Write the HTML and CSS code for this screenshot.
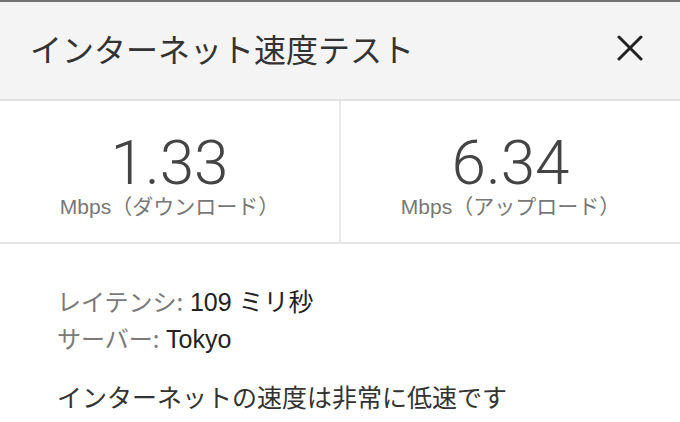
FILE: index.html
```html
<!DOCTYPE html>
<html lang="ja">
<head>
<meta charset="utf-8">
<link rel="stylesheet" href="styles.css">
</head>
<body>
<div class="topline"></div>
<header class="header">
  <h1 class="title">インターネット速度テスト</h1>
  <button class="close" aria-label="閉じる">
    <svg width="26" height="26" viewBox="0 0 26 26"><path d="M2 2 L24 24 M24 2 L2 24" stroke="#222" stroke-width="3" stroke-linecap="round" fill="none"/></svg>
  </button>
</header>
<section class="stats">
  <div class="stat">
    <div class="num">1.33</div>
    <div class="unit">Mbps（ダウンロード）</div>
  </div>
  <div class="divider"></div>
  <div class="stat">
    <div class="num">6.34</div>
    <div class="unit">Mbps（アップロード）</div>
  </div>
</section>
<section class="details">
  <div class="row"><span class="label">レイテンシ:</span> <span class="value">109 ミリ秒</span></div>
  <div class="row"><span class="label">サーバー:</span> <span class="value">Tokyo</span></div>
  <p class="message">インターネットの速度は非常に低速です</p>
</section>
</body>
</html>
```
FILE: styles.css
```css
html, body {
  margin: 0;
  padding: 0;
  background: #ffffff;
  font-family: "Liberation Sans", "Noto Sans CJK JP", sans-serif;
  width: 680px;
  height: 422px;
  overflow: hidden;
}
.topline {
  height: 2px;
  background: #727272;
}
.header {
  height: 99px;
  background: #f4f4f4;
  border-bottom: 2px solid #e2e2e2;
  display: flex;
  align-items: center;
  justify-content: space-between;
  padding: 0 37px 6px 30px;
  box-sizing: border-box;
}
.title {
  margin: 0;
  font-family: "Noto Sans CJK JP", sans-serif;
  font-weight: 400;
  font-size: 32px;
  color: #333;
}
.close {
  border: 0;
  background: none;
  padding: 0;
  width: 26px;
  height: 26px;
  display: flex;
}
.stats {
  display: flex;
  height: 141px;
  border-bottom: 2px solid #e6e6e6;
}
.stat {
  flex: 1;
  display: flex;
  flex-direction: column;
  align-items: center;
  padding-top: 31px;
  gap: 2px;
}
.divider {
  width: 2px;
  background: #e6e6e6;
}
.num {
  font-family: "Roboto", sans-serif;
  font-weight: 300;
  font-size: 62px;
  line-height: 62px;
  color: #444;
}
.unit {
  font-size: 21px;
  line-height: 22px;
  color: #777;
}
.details {
  padding: 38px 0 0 57px;
  font-size: 24px;
}
.row {
  height: 37px;
  line-height: 37px;
  white-space: nowrap;
}
.label {
  color: #7a7a7a;
  font-family: "Noto Sans CJK JP", sans-serif;
}
.value {
  color: #222;
  font-size: 25px;
}
.message {
  margin: 22px 0 0;
  font-family: "Noto Sans CJK JP", sans-serif;
  font-size: 25px;
  line-height: 36px;
  color: #333;
}
```
